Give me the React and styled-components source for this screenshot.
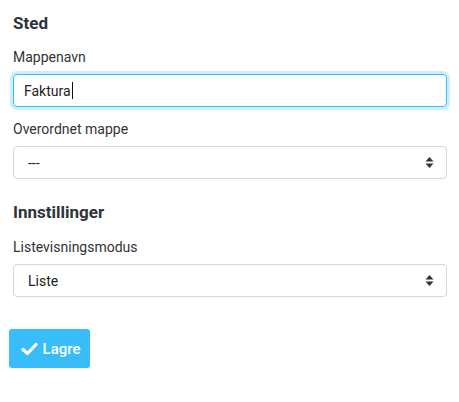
import styled, { createGlobalStyle } from "styled-components"

const GlobalStyle = createGlobalStyle`
    body {
        margin: 0;
        background: #ffffff;
        font-family: Roboto, "Liberation Sans", sans-serif;
        color: #333333;
    }
`

export default function App() {
    return (
        <Page>
            <GlobalStyle />

            <Heading>Sted</Heading>
            <Field>
                <Label>Mappenavn</Label>
                <TextInput defaultValue="Faktura" />
            </Field>
            <Field>
                <Label>Overordnet mappe</Label>
                <SelectBox value="---" />
            </Field>

            <Heading second>Innstillinger</Heading>
            <Field>
                <Label>Listevisningsmodus</Label>
                <SelectBox value="Liste" />
            </Field>

            <SaveButton>
                <svg width="17" height="14" viewBox="0 0 17 14">
                    <path d="M2 7.5 L6.5 11.5 L15 2.5" fill="none" stroke="#fff" strokeWidth="3.2" strokeLinecap="round" strokeLinejoin="round" />
                </svg>
                Lagre
            </SaveButton>
        </Page>
    )
}

function SelectBox({ value }) {
    return (
        <Select>
            <span>{value}</span>
            <svg width="9" height="13" viewBox="0 0 9 13">
                <path d="M4.5 1 L8.5 5.5 H0.5 Z" fill="#333" />
                <path d="M4.5 12 L8.5 7.5 H0.5 Z" fill="#333" />
            </svg>
        </Select>
    )
}

function TextInput({ defaultValue }) {
    return (
        <Input>
            <span>{defaultValue}</span>
            <Caret />
        </Input>
    )
}

const Page = styled.div`
    padding: 10px 12px 0 13px;
    display: flex;
    flex-direction: column;
`

const Heading = styled.div`
    font-size: 17px;
    font-weight: 700;
    line-height: 24px;
    color: #2d3338;
    margin-top: ${props => props.second ? "21px" : "1px"};
    margin-bottom: ${props => props.second ? "1px" : "0"};
`

const Field = styled.div`
    display: flex;
    flex-direction: column;
    margin-top: 12px;
`

const Label = styled.div`
    font-size: 14px;
    line-height: 20px;
    color: #333;
    margin-bottom: 7px;
`

const Input = styled.div`
    box-sizing: border-box;
    height: 33px;
    border: 1px solid #36bdf7;
    border-radius: 4px;
    box-shadow: 0 0 0 3px rgba(54, 189, 247, 0.25);
    display: flex;
    align-items: center;
    padding: 0 10px;
    font-size: 14px;
    color: #222;
`

const Caret = styled.span`
    display: inline-block;
    width: 1px;
    height: 17px;
    background: #111;
    margin-left: 1px;
`

const Select = styled.div`
    box-sizing: border-box;
    height: 33px;
    border: 1px solid #d4d7da;
    border-radius: 4px;
    display: flex;
    align-items: center;
    justify-content: space-between;
    padding: 0 12px 0 14px;
    font-size: 14px;
    color: #222;
`

const SaveButton = styled.button`
    align-self: flex-start;
    margin: 32px 0 0 -4px;
    width: 81px;
    height: 39px;
    border: none;
    border-radius: 3px;
    background: #38bdf8;
    color: #fff;
    font-family: Roboto, "Liberation Sans", sans-serif;
    font-size: 15px;
    font-weight: 500;
    display: flex;
    align-items: center;
    justify-content: center;
    gap: 5px;
    padding: 0 0 0 2px;
`
